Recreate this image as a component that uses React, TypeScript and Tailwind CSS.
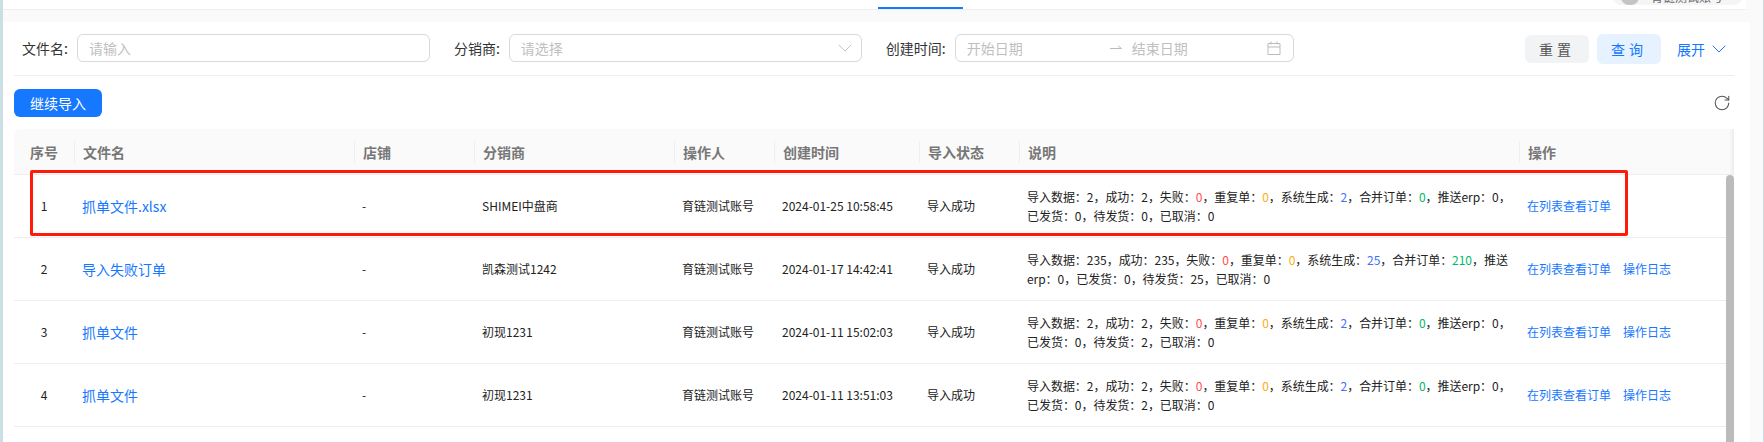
import { ChevronDown, RotateCw } from 'lucide-react';

const columns = 'grid grid-cols-[60px_280px_120px_200px_100px_145px_100px_500px_1fr]';

type Row = {
  no: number;
  name: string;
  seller: string;
  time: string;
  counts: [string, string, string, string, string, string];
  remain: [string, string, string];
  erpBreak?: boolean;
  log: boolean;
};

const rows: Row[] = [
  { no: 1, name: '抓单文件.xlsx', seller: 'SHIMEI中盘商', time: '2024-01-25 10:58:45', counts: ['2', '2', '0', '0', '2', '0'], remain: ['0', '0', '0'], log: false },
  { no: 2, name: '导入失败订单', seller: '凯森测试1242', time: '2024-01-17 14:42:41', counts: ['235', '235', '0', '0', '25', '210'], remain: ['0', '25', '0'], erpBreak: true, log: true },
  { no: 3, name: '抓单文件', seller: '初现1231', time: '2024-01-11 15:02:03', counts: ['2', '2', '0', '0', '2', '0'], remain: ['0', '2', '0'], log: true },
  { no: 4, name: '抓单文件', seller: '初现1231', time: '2024-01-11 13:51:03', counts: ['2', '2', '0', '0', '2', '0'], remain: ['0', '2', '0'], log: true },
];

const headers = ['文件名', '店铺', '分销商', '操作人', '创建时间', '导入状态', '说明', '操作'];

const Description = ({ row }: { row: Row }) => {
  const [total, ok, failed, dup, generated, merged] = row.counts;
  return (
    <p className="text-xs leading-[19px] tracking-[-0.04px] text-[#222]">
      导入数据：{total}，成功：{ok}，失败：<span className="text-[#ff4d4f]">{failed}</span>，重复单：
      <span className="text-[#faad14]">{dup}</span>，系统生成：<span className="text-[#3f6fff]">{generated}</span>，合并订单：
      <span className="text-[#00b96b]">{merged}</span>，推送{row.erpBreak ? <br /> : null}erp：0，{row.erpBreak ? null : <br />}
      已发货：{row.remain[0]}，待发货：{row.remain[1]}，已取消：{row.remain[2]}
    </p>
  );
};

export default function App() {
  return (
    <div className="relative flex h-[442px] w-[1764px] overflow-hidden bg-[#fafafa] font-['Noto_Sans_CJK_SC',sans-serif] text-sm text-[#222]">
      <div className="w-[3px] shrink-0 bg-[#c9dfe4]" />

      <div className="flex w-[1760px] flex-col">
        {/* top bar, cut off by the screenshot */}
        <div className="flex h-[10px] w-[1743px] overflow-hidden border-b border-[#eeeeee] bg-white">
          <div className="ml-[875px] h-[2px] w-[85px] self-end bg-[#1677ff]" />
          <div className="ml-auto mr-[4px] -mt-[11px] flex h-[16px] w-[129px] items-center rounded-full bg-[#f4f5f7] pl-[8px]">
            <div className="h-[16px] w-[18px] rounded-full bg-[#c4c4c4]" />
            <span className="ml-[12px] text-xs text-[#666]">育链测试账号</span>
          </div>
        </div>

        <div className="mt-[12px] flex w-[1747px] flex-1 flex-col bg-white pl-[11px] pr-[16px]">
          {/* filters */}
          <div className="flex h-[54px] shrink-0 items-start border-b border-[#eeeeee] pl-[8px] pr-[3px] pt-[12px]">
            <div className="flex items-center gap-[9px]">
              <label className="text-[#333]">文件名:</label>
              <input
                placeholder="请输入"
                className="h-[28px] w-[353px] rounded-md border border-[#d9d9d9] px-[11px] text-sm outline-none placeholder:text-[#bfbfbf]"
              />
            </div>
            <div className="ml-6 flex items-center gap-[9px]">
              <label className="text-[#333]">分销商:</label>
              <div className="flex h-[28px] w-[353px] items-center justify-between rounded-md border border-[#d9d9d9] pl-[11px] pr-[4px] text-[#bfbfbf]">
                请选择
                <ChevronDown size={24} strokeWidth={0.7} className="text-[#aaa]" />
              </div>
            </div>
            <div className="ml-6 flex items-center gap-[9px]">
              <label className="text-[#333]">创建时间:</label>
              <div className="flex h-[28px] w-[339px] items-center rounded-md border border-[#d9d9d9] pl-[11px] pr-[12px] text-[#bfbfbf]">
                <span className="w-[143px]">开始日期</span>
                <svg width="12" height="6" viewBox="0 0 12 6" fill="none" stroke="#bbb" strokeWidth="1">
                  <path d="M0 3.5h11.5M8 .8l3.5 2.7" />
                </svg>
                <span className="ml-[10px]">结束日期</span>
                <svg className="ml-auto" width="14" height="14" viewBox="0 0 14 14" fill="none" stroke="#bbb" strokeWidth="1">
                  <path d="M1 2.5h12v11H1zM1 6h12M4 .5v3M10 .5v3" />
                </svg>
              </div>
            </div>
            <div className="ml-auto flex items-center">
              <button className="h-[28px] w-[64px] rounded-md bg-[#f2f3f5] tracking-[4px] text-[#555]">重置</button>
              <button className="ml-2 h-[30px] w-[64px] rounded-md bg-[#e6f2ff] tracking-[4px] text-[#1677ff]">查询</button>
              <span className="ml-4 text-[#1677ff]">展开</span>
              <ChevronDown size={24} strokeWidth={1} className="ml-[2px] text-[#1677ff]" />
            </div>
          </div>

          {/* toolbar */}
          <div className="flex h-[53px] shrink-0 items-center justify-between pr-[3px]">
            <button className="h-[28px] w-[88px] rounded-md bg-[#1677ff] text-sm text-white">继续导入</button>
            <RotateCw size={18} strokeWidth={1.4} className="text-[#555]" />
          </div>

          {/* table */}
          <div className={`${columns} relative h-[46px] shrink-0 items-center rounded-t-md border-b border-[#eeeeee] bg-[#fafafa] font-bold text-[#777]`}>
            <div className="text-center">序号</div>
            {headers.map((title) => (
              <div key={title} className="flex h-[22px] items-center border-l border-[#eeeeee] pl-2">
                {title}
              </div>
            ))}
            <div className="absolute bottom-0 right-0 top-0 w-[5px] bg-gradient-to-r from-transparent to-[#ececec]" />
          </div>

          <div className="flex min-h-0 flex-1">
            <div className="min-w-0 flex-1">
              {rows.map((row) => (
                <div key={row.no} className={`${columns} h-[63px] items-center border-b border-[#eeeeee] text-xs`}>
                  <div className="text-center">{row.no}</div>
                  <div className="pl-2 text-sm text-[#1677ff]">{row.name}</div>
                  <div className="pl-2">-</div>
                  <div className="pl-2">{row.seller}</div>
                  <div className="pl-2">育链测试账号</div>
                  <div className="pl-2">{row.time}</div>
                  <div className="pl-2">导入成功</div>
                  <div className="pl-2">
                    <Description row={row} />
                  </div>
                  <div className="flex gap-3 pl-2 text-[#1677ff]">
                    <span>在列表查看订单</span>
                    {row.log ? <span>操作日志</span> : null}
                  </div>
                </div>
              ))}
            </div>
            <div className="w-2 shrink-0 rounded-t-sm bg-[#bbbbbb]" />
          </div>
        </div>
      </div>

      <div className="w-px shrink-0 bg-[#c9dfe4]" />

      {/* red annotation drawn over the first row */}
      <div className="absolute left-[30px] top-[170px] h-[66px] w-[1598px] rounded-[2px] border-[3px] border-[#ff1a0a]" />
    </div>
  );
}
